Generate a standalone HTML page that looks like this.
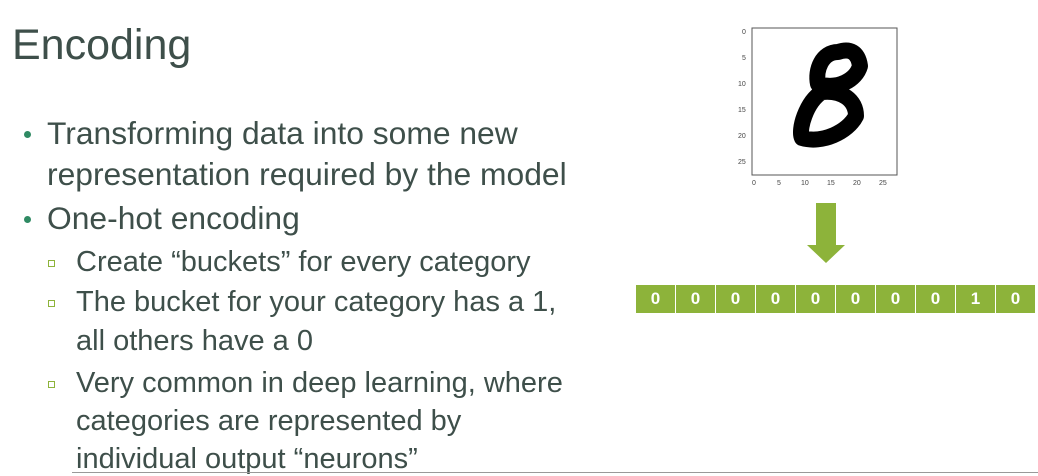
<!DOCTYPE html>
<html><head><style>
body{margin:0;width:1038px;height:474px;background:#fff;overflow:hidden;position:relative;font-family:"Liberation Sans",sans-serif;color:#3e4f4a}
.t{position:absolute;white-space:nowrap}
.b1{font-size:31.8px;left:47px}
.b2{font-size:29px;left:76px}
.dot{position:absolute;width:7px;height:7px;border-radius:50%;background:#2f8a63}
.sq{position:absolute;width:5px;height:5px;border:1.3px solid #8db33a}
.bar{position:absolute;left:636px;top:285px;height:28px;width:399px;display:flex;background:#8db33a}
.bar div{flex:1;border-right:1.5px solid #fff;color:#fff;font-weight:bold;font-size:17px;display:flex;align-items:center;justify-content:center}
.bar div:last-child{border-right:none}
</style></head><body>
<div class="t" style="left:12px;top:21px;font-size:43px;color:#3e4f4a">Encoding</div>
<div class="dot" style="left:24px;top:131px"></div>
<div class="t b1" style="top:115px">Transforming data into some new</div>
<div class="t b1" style="top:156px">representation required by the model</div>
<div class="dot" style="left:24px;top:216px"></div>
<div class="t b1" style="top:200px">One-hot encoding</div>
<div class="sq" style="left:48px;top:260px"></div>
<div class="t b2" style="top:246px">Create “buckets” for every category</div>
<div class="sq" style="left:48px;top:300px"></div>
<div class="t b2" style="top:286px">The bucket for your category has a 1,</div>
<div class="t b2" style="top:325px">all others have a 0</div>
<div class="sq" style="left:48px;top:381px"></div>
<div class="t b2" style="top:367px">Very common in deep learning, where</div>
<div class="t b2" style="top:405px">categories are represented by</div>
<div class="t b2" style="top:443px">individual output “neurons”</div>
<div style="position:absolute;left:72px;top:472px;width:966px;height:1px;background:#999"></div>

<svg style="position:absolute;left:730px;top:20px" width="180" height="175" viewBox="730 20 180 175">
<rect x="752" y="28" width="145" height="147" fill="#fff" stroke="#555" stroke-width="1"/>
<g font-size="7" fill="#444" font-family="Liberation Sans">
<text x="742" y="34">0</text><text x="742" y="60">5</text><text x="738" y="86">10</text><text x="738" y="112">15</text><text x="738" y="138">20</text><text x="738" y="164">25</text>
<text x="752" y="185">0</text><text x="777" y="185">5</text><text x="801" y="185">10</text><text x="827" y="185">15</text><text x="853" y="185">20</text><text x="879" y="185">25</text>
</g>
<g fill="none" stroke="#000" stroke-linecap="round" stroke-linejoin="round" stroke-width="16">
<path d="M838 52 C822 52 815 70 818 84 C838 90 856 80 860 66 C858 52 850 48 838 52 Z"/>
<path d="M822 92 C806 102 798 130 802 138 C822 144 848 132 856 116 C856 100 842 90 822 92 Z"/>
</g>
<g fill="#fff"><ellipse cx="837" cy="68" rx="9" ry="5" transform="rotate(-20 837 68)"/><ellipse cx="826" cy="116" rx="10" ry="6" transform="rotate(-20 826 116)"/></g>
</svg>
<svg style="position:absolute;left:805px;top:202px" width="42" height="62">
<path d="M11 1H31V43H40L21 61L2 43H11Z" fill="#8db33a"/>
</svg>
<div class="bar"><div>0</div><div>0</div><div>0</div><div>0</div><div>0</div><div>0</div><div>0</div><div>0</div><div>1</div><div>0</div></div>
</body></html>
